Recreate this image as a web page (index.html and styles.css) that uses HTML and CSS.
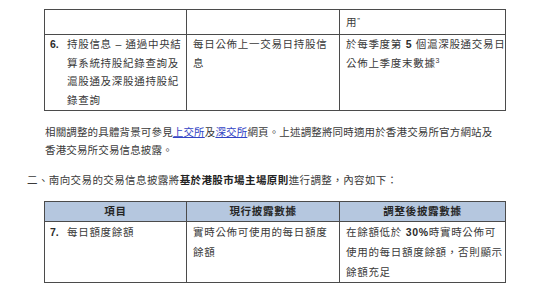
FILE: index.html
```html
<!DOCTYPE html>
<html lang="zh-TW">
<head>
<meta charset="utf-8">
<link rel="stylesheet" href="styles.css">
</head>
<body>
<div class="page">
  <table class="tbl t1">
    <colgroup><col class="c1"><col class="c2"><col class="c3"></colgroup>
    <tr class="cont">
      <td></td>
      <td></td>
      <td>用<span class="q">”</span></td>
    </tr>
    <tr class="r6">
      <td><div class="item"><span class="num">6.</span><span class="txt">持股信息 – 通過中央結<br>算系統持股紀錄查詢及<br>滬股通及深股通持股紀<br>錄查詢</span></div></td>
      <td>每日公佈上一交易日持股信<br>息</td>
      <td>於每季度第 <b class="lat">5</b> 個滬深股通交易日<br>公佈上季度末數據<sup>3</sup></td>
    </tr>
  </table>

  <p class="para">相關調整的具體背景可參見<a href="#">上交所</a>及<a href="#">深交所</a>網頁<span class="cjk">。</span>上述調整將同時適用於香港交易所官方網站及<br>香港交易所交易信息披露<span class="cjk">。</span></p>

  <p class="head">二<span class="cjk">、</span>南向交易的交易信息披露將<b>基於港股市場主場原則</b>進行調整<span class="cjk">，</span>內容如下<span class="cjk">：</span></p>

  <table class="tbl t2">
    <colgroup><col class="c1"><col class="c2"><col class="c3"></colgroup>
    <tr class="hdr">
      <th>項目</th>
      <th>現行披露數據</th>
      <th>調整後披露數據</th>
    </tr>
    <tr class="r7">
      <td><div class="item"><span class="num">7.</span><span class="txt">每日額度餘額</span></div></td>
      <td>實時公佈可使用的每日額度<br>餘額</td>
      <td>在餘額低於 <b class="lat">30%</b>時實時公佈可<br>使用的每日額度餘額<span class="cjk">，</span>否則顯示<br>餘額充足</td>
    </tr>
  </table>
</div>
</body>
</html>
```

FILE: styles.css
```css
html, body {
  margin: 0;
  padding: 0;
  background: #ffffff;
}

body {
  font-family: "Liberation Sans", "Noto Sans CJK TC", sans-serif;
  color: #3a3a3a;
  font-size: 10.5px;
}

.page {
  padding: 9px 0 0 0;
  width: 550px;
  height: 283px;
  box-sizing: border-box;
  overflow: hidden;
}

.cjk {
  font-family: "Noto Sans CJK TC", sans-serif;
  font-feature-settings: "locl" 1;
}

.tbl {
  border-collapse: collapse;
  table-layout: fixed;
  width: 461px;
  margin-left: 44px;
}

.tbl .c1 { width: 142px; }
.tbl .c2 { width: 153px; }
.tbl .c3 { width: 166px; }

.tbl td, .tbl th {
  border: 1px solid #4b4b4b;
  vertical-align: top;
  text-align: left;
  padding: 0 6px;
  letter-spacing: 0.7px;
  white-space: nowrap;
}

.t1 td {
  line-height: 19px;
}

.t1 .cont td {
  height: 22px;
  padding-top: 1px;
  padding-bottom: 2px;
  vertical-align: middle;
  box-sizing: border-box;
}

.t1 .r6 td {
  padding-top: 0;
  line-height: 18.7px;
}

.q {
  font-size: 8px;
  vertical-align: 3px;
  letter-spacing: 0;
}

.item {
  display: flex;
}

.item .num {
  width: 17px;
  flex: none;
  font-weight: bold;
  letter-spacing: 0;
  color: #2c2c2c;
}

.tbl td:first-child {
  padding-left: 5px;
}

.lat {
  font-weight: bold;
  color: #2c2c2c;
}

sup {
  font-size: 7px;
  line-height: 0;
  vertical-align: 4px;
  letter-spacing: 0;
}

.para {
  margin: 12px 0 0 45px;
  line-height: 17px;
  font-size: 10.5px;
  letter-spacing: 0.15px;
}

.para a {
  color: #3344c4;
  text-decoration: underline;
}

.head {
  margin: 12px 0 0 27px;
  line-height: 17px;
  font-size: 10.5px;
  letter-spacing: 0.4px;
}

.head b {
  color: #222222;
}

.t2 {
  margin-top: 12px;
}

.t2 th {
  background: #b5c7df;
  text-align: center;
  font-weight: bold;
  color: #262626;
  height: 19px;
  line-height: 19px;
  padding: 0;
}

.t2 td {
  line-height: 20px;
}
```
